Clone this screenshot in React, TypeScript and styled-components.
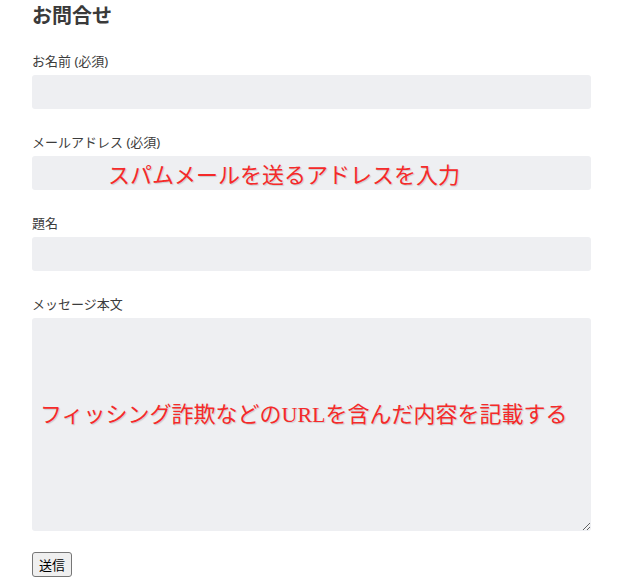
import React from 'react'
import styled, { createGlobalStyle } from 'styled-components'

const GlobalStyle = createGlobalStyle`
  body {
    margin: 0;
    background: #ffffff;
    font-family: "Noto Sans", "Noto Sans CJK JP", sans-serif;
  }
`

type FieldProps = {
  label: string
  multiline?: boolean
  note?: string
  noteSerif?: boolean
}

function Field({ label, multiline = false, note, noteSerif = false }: FieldProps) {
  return (
    <Group>
      <Label>{label}</Label>
      <Control>
        {multiline ? <TextArea /> : <Input type="text" />}
        {note && (
          <Note $serif={noteSerif} $multiline={multiline}>
            {note}
          </Note>
        )}
      </Control>
    </Group>
  )
}

export default function App() {
  return (
    <>
      <GlobalStyle />
      <Page>
        <Title>お問合せ</Title>
        <Form onSubmit={(e) => e.preventDefault()}>
          <Field label="お名前 (必須)" />
          <Field label="メールアドレス (必須)" note="スパムメールを送るアドレスを入力" />
          <Field label="題名" />
          <Field
            label="メッセージ本文"
            multiline
            noteSerif
            note="フィッシング詐欺などのURLを含んだ内容を記載する"
          />
          <SubmitButton type="submit">送信</SubmitButton>
        </Form>
      </Page>
    </>
  )
}

const Page = styled.div`
  width: 559px;
  padding: 0 31px 0 32px;
`

const Title = styled.h2`
  margin: 0 0 19px;
  font-size: 20px;
  line-height: 32px;
  font-weight: 700;
  color: #3a3a3a;
`

const Form = styled.form`
  display: flex;
  flex-direction: column;
  align-items: flex-start;
  gap: 23px;
`

const Group = styled.div`
  display: flex;
  flex-direction: column;
  width: 100%;
  gap: 4px;
`

const Label = styled.label`
  font-size: 13px;
  line-height: 20px;
  color: #3c3c3c;
`

const Control = styled.div`
  position: relative;
  width: 100%;
`

const fieldBase = `
  display: block;
  width: 100%;
  box-sizing: border-box;
  border: none;
  border-radius: 3px;
  background: #eeeff2;
  font-size: 14px;
  padding: 6px 10px;
  outline: none;
`

const Input = styled.input`
  ${fieldBase}
  height: 34px;
`

const TextArea = styled.textarea`
  ${fieldBase}
  height: 213px;
  resize: vertical;
`

const Note = styled.span<{ $serif: boolean; $multiline: boolean }>`
  position: absolute;
  left: ${(p) => (p.$multiline ? '8px' : '76px')};
  top: ${(p) => (p.$multiline ? '83px' : '3px')};
  font-family: ${(p) =>
    p.$serif
      ? '"Liberation Serif", "Noto Sans CJK JP", serif'
      : '"Noto Sans CJK JP", sans-serif'};
  font-size: 22px;
  font-weight: 400;
  line-height: 28px;
  color: #f52a2a;
  text-shadow: 1px 1px 1px rgba(0, 0, 0, 0.15);
  white-space: nowrap;
  pointer-events: none;
`

const SubmitButton = styled.button`
  margin-top: -2px;
  height: 25px;
  padding: 0 6px;
  font-family: "Noto Sans CJK JP", sans-serif;
  font-size: 13px;
  color: #000;
  background: #efefef;
  border: 1px solid #767676;
  border-radius: 3px;
`
